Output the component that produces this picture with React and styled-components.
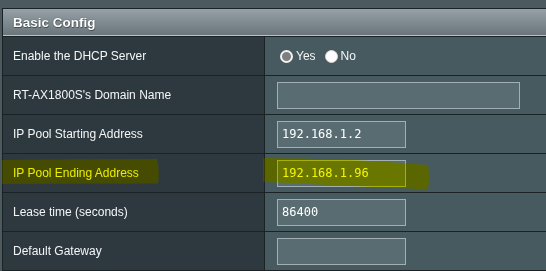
import React from "react";
import styled, { createGlobalStyle } from "styled-components";

const GlobalStyle = createGlobalStyle`
  html, body {
    margin: 0;
    padding: 0;
    background: #4c595f;
    overflow: hidden;
  }
  body {
    width: 546px;
    height: 271px;
    font-family: "Liberation Sans", Arial, sans-serif;
  }
`;

const Page = styled.div`
  position: relative;
  width: 546px;
  height: 271px;
  overflow: hidden;
  padding: 8px 0 0 2px;
  box-sizing: border-box;
`;

const Table = styled.div`
  width: 600px;
  border-left: 1px solid #1b2226;
  border-top: 1px solid #1b2226;
`;

const Header = styled.div`
  height: 26px;
  box-sizing: content-box;
  background: linear-gradient(#95a1a6, #6a767b);
  border-bottom: 1px solid #b8c2c6;
  box-shadow: 0 1px 0 #1b2226;
  margin-bottom: 1px;
  display: flex;
  align-items: center;
  padding-left: 10px;
  color: #ffffff;
  font-size: 13.5px;
  font-weight: 700;
  text-shadow: 0 0 1px #2e383c, 0.5px 0.5px 0 #4a5458;
`;

const Row = styled.div`
  display: grid;
  grid-template-columns: 262px 1fr;
  height: 38px;
  box-sizing: content-box;
  border-bottom: 1px solid #1b2226;
`;

const Label = styled.div`
  box-sizing: border-box;
  background: #2e393f;
  border-right: 1px solid #1b2226;
  display: flex;
  align-items: center;
  padding-left: 10px;
  color: #f4f6f7;
  font-size: 12px;
`;

const Value = styled.div`
  background: #475a60;
  display: flex;
  align-items: center;
  padding-left: 12px;
`;

const Field = styled.input`
  box-sizing: border-box;
  width: ${(p) => p.$w}px;
  height: 27px;
  margin: 0;
  border: 1px solid #a3afb3;
  background: #596c72;
  color: #ffffff;
  font-family: "DejaVu Sans Mono", "Liberation Mono", monospace;
  font-size: 12px;
  padding: 0 0 0 4px;
  outline: none;
`;

const RadioGroup = styled.div`
  display: flex;
  align-items: center;
  padding-left: 3px;
  gap: 9px;
`;

const RadioOption = styled.label`
  display: flex;
  align-items: center;
  gap: 3px;
  color: #f4f6f7;
  font-size: 12px;
`;

const RadioDot = styled.span`
  box-sizing: border-box;
  width: 13px;
  height: 13px;
  border-radius: 50%;
  background: ${(p) => (p.$checked ? "#7c7f80" : "#ffffff")};
  border: ${(p) => (p.$checked ? "2px solid #f2f2f2" : "1px solid #d8d8d8")};
  box-shadow: 0 0 0 0.5px #555;
`;

const Highlighter = styled.svg`
  position: absolute;
  left: 0;
  top: 0;
  pointer-events: none;
  mix-blend-mode: ${(p) => p.$mode};
`;

const rows = [
  { label: "Enable the DHCP Server", type: "radio" },
  { label: "RT-AX1800S's Domain Name", value: "", w: 243 },
  { label: "IP Pool Starting Address", value: "192.168.1.2", w: 129 },
  { label: "IP Pool Ending Address", value: "192.168.1.96", w: 129 },
  { label: "Lease time (seconds)", value: "86400", w: 129 },
  { label: "Default Gateway", value: "", w: 129 },
];

const strokes = [
  "M1 160 L60 159.5 L157 159 Q160 171 158 183.5 L60 183.8 L1 184 Z",
  "M263 158 C 300 158.5, 330 159, 360 160.5 C 390 162, 410 163.5, 428 165 Q 430 177 428 189.5 C 400 188, 360 186.5, 320 184.5 C 300 183.5, 280 182.5, 263 182 Z",
];

function Marker({ mode, fill }) {
  return (
    <Highlighter $mode={mode} width="546" height="271" viewBox="0 0 546 271">
      {strokes.map((d) => (
        <path key={d} d={d} fill={fill} />
      ))}
    </Highlighter>
  );
}

export default function App() {
  return (
    <>
      <GlobalStyle />
      <Page>
        <Table>
          <Header>Basic Config</Header>
          {rows.map((r) => (
            <Row key={r.label}>
              <Label>{r.label}</Label>
              <Value>
                {r.type === "radio" ? (
                  <RadioGroup>
                    <RadioOption>
                      <RadioDot $checked />
                      Yes
                    </RadioOption>
                    <RadioOption>
                      <RadioDot />
                      No
                    </RadioOption>
                  </RadioGroup>
                ) : (
                  <Field $w={r.w} value={r.value} readOnly />
                )}
              </Value>
            </Row>
          ))}
        </Table>
        <Marker mode="multiply" fill="#f4f400" />
        <Marker mode="screen" fill="#1e1a00" />
      </Page>
    </>
  );
}
